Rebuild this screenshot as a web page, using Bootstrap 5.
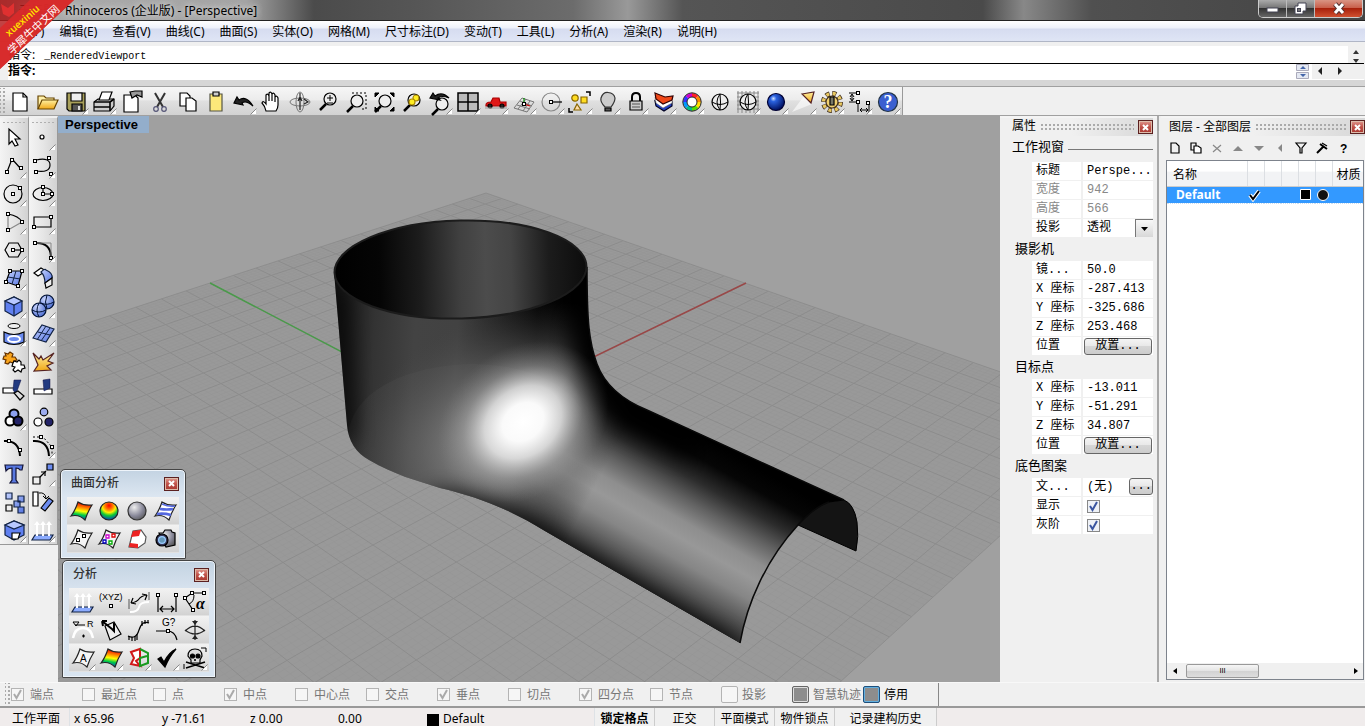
<!DOCTYPE html>
<html lang="zh-CN">
<head>
<meta charset="utf-8">
<meta name="viewport" content="width=device-width, initial-scale=1">
<title>Rhinoceros (企业版) - [Perspective]</title>
<link href="https://cdn.jsdelivr.net/npm/bootstrap@5.3.0/dist/css/bootstrap.min.css" rel="stylesheet">
<style>
body{font:12px/18px "Noto Sans","Noto Sans CJK SC",sans-serif;color:#000;background:#f0f0f0;overflow:hidden}
button,input,select{font:inherit;color:inherit;border-radius:0}
.titlebar{height:21px;background:linear-gradient(90deg,#777,#aaa 4%,#a4a4a4 18%,#4b4b4b 23%,#555 30%,#6c6c6c 42%,#999 46%,#555 50%,#4a4a4a 72%,#888 75%,#505050 80%,#444);border-bottom:1px solid #222}
.titlebar h1{font:inherit;padding-left:19px;line-height:22px}
.titlebar h1 span{text-shadow:0 0 6px #ddd,0 0 6px #ccc}
.winbtns{margin-right:2px;height:18px;border:1px solid #ccc;border-top:0;border-radius:0 0 5px 5px;overflow:hidden}
.winbtns button{border:0;border-right:1px solid #bbb;background:linear-gradient(#aaa,#777 45%,#333 50%,#666);width:28px;padding:0;line-height:0}
.winbtns button:last-child{width:47px;border:0;background:linear-gradient(#d99484,#c9604c 45%,#a8210c 50%,#d05030)}
.menubar{height:21px;background:linear-gradient(#fff,#eef1fa 35%,#d6dcf0 40%,#dfe5f5);border-bottom:1px solid #b0b6c6}
.menubar a{color:#000;text-decoration:none;padding:0 8px 0 7px;line-height:22px}
.cmdarea{height:45px;background:#f0f0f0;padding:4px 1px 0 8px;border-bottom:1px solid #a0a0a0}
.cmdrow{height:17px;background:#fff;line-height:17px}
.cmdrow:first-child{border-bottom:1px solid #000;height:18px}
.cmdrow+.cmdrow{height:16px;line-height:14px}
.cmdarea:after{content:"";display:block;height:6px;margin:0 -1px 0 -8px;background:#d6d6d6}
.mono10{font-family:"Liberation Mono","Noto Sans CJK SC",monospace;font-size:10px;margin-left:6px}
.cmdrow input{border:0;outline:0;background:none;min-width:0}
.toolstrip{height:29px;background:#f0f0f0;border-bottom:1px solid #a0a0a0}
.bar1{background:linear-gradient(#f6f6f6,#ececec 45%,#e0e0e0 50%,#d2d2d2);border-right:1px solid #999;padding-top:1px}
.griph{width:6px;background:radial-gradient(circle,#aaa 1px,transparent 1px) 2px 2px/4px 4px}
.gripv{height:6px;margin:0 2px;background:radial-gradient(circle,#b0b0b0 1px,transparent 1px) 0 2px/4px 5px}
.tool{border:0;background:none;padding:0;width:28px;height:28px;line-height:0;flex:none}
.tool svg{width:28px;height:28px}
.toolcol{width:29px;background:linear-gradient(90deg,#f4f4f4,#e6e6e6 50%,#d2d2d2);border-right:1px solid #999;border-bottom:1px solid #999;border-top:2px solid #f0f0f0}
.viewport{background:#a0a0a0;min-width:0;overflow:hidden}
.scene{position:absolute;inset:0;width:100%;height:100%}
.vplabel{position:absolute;left:0;top:0;background:#93aecb;font:bold 13px/17px "Liberation Sans",sans-serif;padding:0 11px 0 7px}
.palette{position:absolute;background:linear-gradient(#c3d3e2,#dce6f1 30%,#d8e4f0);border:1px solid #444;border-radius:5px 5px 1px 1px;box-shadow:inset 0 0 0 1px #eef4fa;padding:0 6px}
.palette h2{font-size:12px;line-height:26px;height:27px;margin:0;padding-left:4px;color:#333}
.pgrid{display:flex;flex-wrap:wrap;background:repeating-linear-gradient(#f2f2f2 0,#e4e4e4 14px,#d2d2d2 27px,#f2f2f2 28px)}
.closex{border:1px solid #5b2020;background:linear-gradient(#e09a90,#c05048 50%,#a83830);color:#fff;width:15px;height:14px;padding:0;line-height:0;box-shadow:inset 0 0 0 1px #dba}
.dock{border-top:2px solid #f4f4f4;background:#f0f0f0}
.dockhead{height:18px;background:linear-gradient(90deg,#f0f0f0 45%,#d8d8d8);gap:4px}
.dockhead i{flex:1;height:8px;background:radial-gradient(circle,#aaa 1px,transparent 1px) 0 0/4px 4px}
.props{width:157px;font-family:"Liberation Mono","Noto Sans CJK SC",monospace;font-size:12px}
.props h3{font-size:13px;font-weight:400;margin:0;line-height:23px;height:23px;padding-left:15px}
.props h3.topic{padding-left:12px;height:26px}
.props table{width:121px;margin-left:32px;border-collapse:separate;border-spacing:0;table-layout:fixed}
.props tr{height:19px}
.props th,.props td{font-weight:400;background:#fff;padding:0 0 0 4px;line-height:18px;border-bottom:1px solid #f0f0f0;height:19px;white-space:nowrap}
.props th{width:51px;border-right:2px solid #f0f0f0}
.props td input:not([type=checkbox]),.props select{border:0;background:none;padding:0;width:100%;height:18px;outline:0;appearance:none;display:block}
.props .off{color:#888}
.props .place{border:1px solid #666;border-radius:3px;background:linear-gradient(#f4f4f4,#e8e8e8 48%,#d6d6d6 50%,#ccc);display:block;height:17px;width:68px;margin-left:-3px;line-height:13px;padding:0}
.ddown{width:18px;height:18px;border:1px solid #777;border-right:0;border-bottom:0;background:linear-gradient(#f8f8f8,#d8d8d8);pointer-events:none}
.tick{appearance:none;width:13px;height:13px;border:1px solid #888;background:#eef1f6;margin:0;display:block;flex:none}
.tick:checked{background:#eef1f6 url("data:image/svg+xml,%3Csvg xmlns='http://www.w3.org/2000/svg' viewBox='0 0 11 11'%3E%3Cpath d='M2 5l2.500 4L9 1' fill='none' stroke='%233a55a0' stroke-width='2'/%3E%3C/svg%3E")}
.gutter{width:4px;background:#f0f0f0;border-left:2px solid #a8a8a8}
.layers{width:204px}
.ltools{height:24px;padding-left:3px}
.ltools button{border:0;background:none;padding:0;width:21px;line-height:0}
.lbox{margin:0 1px 2px 5px;border:1px solid #7d838c;background:#fff;min-height:0}
.lbox table{width:100%;table-layout:fixed;border-collapse:collapse}
.lbox th{font-weight:400;height:25px;padding:3px 0 0 6px;background:linear-gradient(#fff 40%,#f2f3f5 45%);border-right:1px solid #dcdfe3;border-bottom:1px solid #ccc;line-height:18px;white-space:nowrap;overflow:hidden}
.lbox th:last-child{padding-left:4px;border-right:0}
.lbox td{background:#39f;color:#fff;height:17px;padding:0;line-height:16px;font-weight:700;border-bottom:1px dotted #cde}
.hbar{height:16px;background:#f0f0f0;margin-top:auto}
.thumb{width:73px;height:14px;border:1px solid #999;border-radius:2px;background:linear-gradient(#f6f6f6,#e4e4e4 48%,#d2d2d2 50%,#ddd);line-height:10px;font-size:8px}
.snapbar{height:26px;background:#f0f0f0;border-bottom:2px solid #999;border-top:1px solid #f8f8f8}
.snapin{padding-left:5px;border-right:1px solid #888;width:939px}
.snapin label{width:71px;gap:6px;font-size:12px;color:#777;white-space:nowrap}
.snapin .tick{border-color:#b4b4b4;background-color:#f6f6f6}
.snapin .tick:checked{background-image:url("data:image/svg+xml,%3Csvg xmlns='http://www.w3.org/2000/svg' viewBox='0 0 11 11'%3E%3Cpath d='M2 5l2.500 4L9 1' fill='none' stroke='%23aaa' stroke-width='2'/%3E%3C/svg%3E")}
.snapin .bigtick{width:17px;height:17px;border-radius:2px}
.snapin label:has(.bigtick){gap:4px}
.snapin .gray{background:#8d8d8d;border-color:#666;box-shadow:inset 0 0 0 1px #ddd}
.snapin .blue{background:#8d8d8d;border-color:#1d4f7c;box-shadow:inset 0 0 0 1px #62b0e0}
.status{height:18px;background:#f0ecec;padding-left:4px}
.status span,.status button{line-height:22px;white-space:nowrap;flex:none}
.status button{border:0;border-right:1px solid #ccc;background:#f0f0f0;width:60px;padding:0}
.ribbon{position:absolute;left:0;top:0;width:74px;height:69px;z-index:5;overflow:visible}
</style>
</head>
<body class="vh-100 d-flex flex-column">
<svg width="0" height="0" class="position-absolute" aria-hidden="true"><defs>
<linearGradient id="rain" x1=".3" y1="0" x2=".1" y2="1"><stop offset="0" stop-color="#e00"/><stop offset=".25" stop-color="#f80"/><stop offset=".45" stop-color="#ff0"/><stop offset=".65" stop-color="#0c4"/><stop offset="1" stop-color="#02f"/></linearGradient>
<radialGradient id="rball" cx=".5" cy=".2" r=".85"><stop offset="0" stop-color="#f00"/><stop offset=".25" stop-color="#f70"/><stop offset=".45" stop-color="#fe0"/><stop offset=".65" stop-color="#1c3"/><stop offset="1" stop-color="#02d"/></radialGradient>
<radialGradient id="bball" cx=".35" cy=".3" r=".7"><stop offset="0" stop-color="#cfe0ff"/><stop offset=".25" stop-color="#2a62e0"/><stop offset="1" stop-color="#001060"/></radialGradient>
<radialGradient id="lball" cx=".35" cy=".3" r=".8"><stop offset="0" stop-color="#cdd8ff"/><stop offset="1" stop-color="#3f62cc"/></radialGradient>
<radialGradient id="gball" cx=".35" cy=".3" r=".8"><stop offset="0" stop-color="#eee"/><stop offset=".6" stop-color="#889"/><stop offset="1" stop-color="#555"/></radialGradient>
<linearGradient id="lb" x1="0" y1="0" x2="1" y2="1"><stop offset="0" stop-color="#c4d2ff"/><stop offset="1" stop-color="#5574e0"/></linearGradient>
<linearGradient id="gold" x1="0" y1="0" x2="0" y2="1"><stop offset="0" stop-color="#fff0a0"/><stop offset="1" stop-color="#f0a818"/></linearGradient>
</defs></svg>

<header class="titlebar d-flex justify-content-between flex-shrink-0">
 <h1 class="mb-0"><span>无标题 - Rhinoceros (企业版) - [Perspective]</span></h1>
 <div class="winbtns d-flex">
  <button type="button" title="最小化"><svg width="14" height="14"><rect x="1" y="6" width="11" height="4" fill="#fff" stroke="#445"/></svg></button>
  <button type="button" title="还原"><svg width="14" height="14"><path d="M4 1h8v8h-3v3h-8v-8h3z" fill="#fff" stroke="#445"/><rect x="3.500" y="6.500" width="3" height="3" fill="#777" stroke="#445"/></svg></button>
  <button type="button" title="关闭"><svg width="14" height="14"><path d="M3 2l8 9M11 2l-8 9" stroke="#533" stroke-width="5"/><path d="M3 2l8 9M11 2l-8 9" stroke="#fff" stroke-width="3"/></svg></button>
 </div>
</header>
<nav class="menubar d-flex flex-shrink-0">
 <a href="#">文件(F)</a><a href="#">编辑(E)</a><a href="#">查看(V)</a><a href="#">曲线(C)</a><a href="#">曲面(S)</a><a href="#">实体(O)</a><a href="#">网格(M)</a><a href="#">尺寸标注(D)</a><a href="#">变动(T)</a><a href="#">工具(L)</a><a href="#">分析(A)</a><a href="#">渲染(R)</a><a href="#">说明(H)</a>
</nav>
<section class="cmdarea flex-shrink-0">
 <div class="cmdrow d-flex justify-content-between"><div>指令: <span class="mono10">_RenderedViewport</span></div><svg width="16" height="17" style="background:#f0f0f0"><path d="M5 8h6l-3-4zM5 13h6l-3 4z" fill="#333"/></svg></div>
 <div class="cmdrow d-flex"><label for="cmd" class="fw-bold">指令:</label><input id="cmd" class="flex-grow-1"><svg width="68" height="15"><path fill="#f0f0f0" d="M16 0h52v15H16z"/><path fill="#e4e8f2" stroke="#aab" d="M.5.5h12v6H.5zM.5 8.500h12v6H.500z"/><path fill="#46a" d="M4 5h6L7 2zM4 10h6l-3 3z"/><path fill="#222" d="M26 3v8l-4-4zM42 3v8l4-4z"/></svg></div>
</section>
<section class="toolstrip d-flex flex-shrink-0"><div class="bar1 d-flex"><div class="griph"></div><div class="d-flex" id="mainbar"></div></div></section>

<main class="d-flex flex-grow-1" style="min-height:0">
 <aside class="d-flex align-items-start">
  <div class="toolcol"><div class="gripv"></div><div id="colA" class="d-flex flex-column"></div></div>
  <div class="toolcol"><div class="gripv"></div><div id="colB" class="d-flex flex-column"></div></div>
 </aside>
 <section class="viewport position-relative flex-grow-1">
  <svg class="scene" viewBox="58 116 942 566" preserveAspectRatio="xMinYMin slice">
   <defs>
    <linearGradient id="cyl" gradientUnits="userSpaceOnUse" x1="334" y1="0" x2="587" y2="12"><stop offset="0" stop-color="#080808"/><stop offset=".08" stop-color="#161616"/><stop offset=".22" stop-color="#333"/><stop offset=".38" stop-color="#434343"/><stop offset=".55" stop-color="#424242"/><stop offset=".7" stop-color="#262626"/><stop offset=".86" stop-color="#070707"/><stop offset="1" stop-color="#000"/></linearGradient>
    <linearGradient id="inner" gradientUnits="userSpaceOnUse" x1="334" y1="0" x2="587" y2="0"><stop offset="0" stop-color="#000"/><stop offset=".18" stop-color="#050505"/><stop offset=".34" stop-color="#1c1c1c"/><stop offset=".5" stop-color="#404040"/><stop offset=".6" stop-color="#4c4c4c"/><stop offset=".7" stop-color="#444"/><stop offset=".85" stop-color="#1c1c1c"/><stop offset="1" stop-color="#0c0c0c"/></linearGradient>
    <linearGradient id="tube" gradientUnits="userSpaceOnUse" x1="690" y1="430" x2="609" y2="574"><stop offset="0" stop-color="#000"/><stop offset=".12" stop-color="#060606"/><stop offset=".25" stop-color="#2c2c2c"/><stop offset=".38" stop-color="#626262"/><stop offset=".5" stop-color="#8e8e8e"/><stop offset=".6" stop-color="#989898"/><stop offset=".72" stop-color="#868686"/><stop offset=".86" stop-color="#565656"/><stop offset="1" stop-color="#242424"/></linearGradient>
    <linearGradient id="fade" gradientUnits="userSpaceOnUse" x1="530" y1="450" x2="596" y2="484"><stop offset="0" stop-color="#000"/><stop offset="1" stop-color="#fff"/></linearGradient>
    <mask id="fm" maskUnits="userSpaceOnUse" x="300" y="200" width="600" height="500"><rect x="300" y="200" width="600" height="500" fill="url(#fade)"/></mask>
    <radialGradient id="mid" gradientUnits="userSpaceOnUse" cx="520" cy="435" r="180" gradientTransform="translate(520 435) rotate(-20) scale(1 .7) translate(-520 -435)"><stop offset="0" stop-color="#b4b4b4"/><stop offset=".4" stop-color="#808080" stop-opacity=".8"/><stop offset="1" stop-color="#484848" stop-opacity="0"/></radialGradient>
    <radialGradient id="hot" gradientUnits="userSpaceOnUse" cx="0" cy="0" r="92" gradientTransform="translate(523 422) rotate(-38) scale(1 .8)"><stop offset="0" stop-color="#fff"/><stop offset=".24" stop-color="#fafafa"/><stop offset=".45" stop-color="#eee" stop-opacity=".75"/><stop offset=".7" stop-color="#bbb" stop-opacity=".3"/><stop offset="1" stop-color="#888" stop-opacity="0"/></radialGradient>
    <filter id="soft" x="-30%" y="-30%" width="160%" height="160%"><feGaussianBlur stdDeviation="11"/></filter>
    <path id="body" d="M334 272L347 425Q349 449 369 460C395 475 415 480 440 488C480 497 515 512 545 531L740 643C747 603 766 560 798 525C809 513 820 505 829 502L844 500L647 410C620 399 604 383 597 364C589 342 587 322 587 267A127 49.500 -1.500 0 1 334 272Z"/>
    <clipPath id="bc"><use href="#body"/></clipPath>
   </defs>
   <g id="floor"></g>
   <path d="M210 283L468 418" stroke="#4a9a4a" stroke-width="1.500"/><path d="M746 283L468 418" stroke="#994848" stroke-width="1.500"/>
   <path d="M798 525C809 513 820 505 829 502L844 500Q854 504 857 522Q859 536 856 551Z" fill="#141414" stroke="#000"/>
   <use href="#body" fill="url(#cyl)"/>
   <g clip-path="url(#bc)">
    <path d="M348 435C352 390 410 364 475 364C540 366 580 390 590 430L600 560H380Z" fill="#777" opacity=".1"/>
    <ellipse cx="505" cy="435" rx="190" ry="150" fill="url(#mid)"/>
    <rect x="510" y="300" width="360" height="360" fill="url(#tube)" mask="url(#fm)"/>
    <g filter="url(#soft)" fill="none">
     <path d="M592 260C590 340 592 375 612 392C630 412 650 415 700 440" stroke="#000" stroke-width="42"/>
     <path d="M430 500C480 502 515 520 545 540L730 650" stroke="#111" stroke-width="16"/>
     <path d="M338 290L347 440" stroke="#000" stroke-width="12"/>
    </g>
    <circle cx="524" cy="419" r="100" fill="url(#hot)"/>
   </g>
   <path d="M587 267C587 322 589 342 597 364C604 383 620 399 647 410L844 500M740 643C747 603 766 560 798 525C809 513 820 505 829 502" fill="none" stroke="#0a0a0a" stroke-width="1.500"/>
   <ellipse cx="460.500" cy="269.500" rx="126" ry="49" transform="rotate(-1.500 460 270)" fill="url(#inner)" stroke="#1c1c1c" stroke-width="2"/>
  </svg>
  <div class="vplabel">Perspective</div>
  <section class="palette" style="left:2px;top:353px;width:126px;height:90px"><div class="d-flex justify-content-between align-items-center"><h2>曲面分析</h2><button class="closex" type="button" title="关闭"><svg width="9" height="9"><path d="M2 2l5 5M7 2L2 7" stroke="#fff" stroke-width="2"/></svg></button></div><div id="palA" class="pgrid"></div></section>
  <section class="palette" style="left:4px;top:444px;width:154px;height:118px"><div class="d-flex justify-content-between align-items-center"><h2>分析</h2><button class="closex" type="button" title="关闭"><svg width="9" height="9"><path d="M2 2l5 5M7 2L2 7" stroke="#fff" stroke-width="2"/></svg></button></div><div id="palB" class="pgrid"></div></section>
 </section>
 <aside class="dock props flex-shrink-0">
  <div class="dockhead d-flex align-items-center ps-2 ms-1 me-1"><span>属性</span><i></i><button class="closex" type="button" title="关闭"><svg width="9" height="9"><path d="M2 2l5 5M7 2L2 7" stroke="#fff" stroke-width="2"/></svg></button></div>
  <div class="d-flex align-items-center"><h3 class="topic">工作视窗</h3><hr class="flex-grow-1 my-0 ms-1 me-1 opacity-50"></div>
  <table>
   <tr><th>标题</th><td><input aria-label="标题" value="Perspe..."></td></tr>
   <tr class="off"><th>宽度</th><td>942</td></tr>
   <tr class="off"><th>高度</th><td>566</td></tr>
   <tr><th>投影</th><td><div class="d-flex"><select aria-label="投影"><option>透视</option></select><span class="ddown flex-shrink-0"><svg width="16" height="16" class="d-block"><path d="M5 7h7l-3.500 4z"/></svg></span></div></td></tr>
  </table>
  <h3>摄影机</h3>
  <table>
   <tr><th>镜...</th><td><input aria-label="镜头" value="50.0"></td></tr>
   <tr><th>X 座标</th><td><input aria-label="摄影机 X" value="-287.413"></td></tr>
   <tr><th>Y 座标</th><td><input aria-label="摄影机 Y" value="-325.686"></td></tr>
   <tr><th>Z 座标</th><td><input aria-label="摄影机 Z" value="253.468"></td></tr>
   <tr><th>位置</th><td><button class="place" type="button">放置...</button></td></tr>
  </table>
  <h3>目标点</h3>
  <table>
   <tr><th>X 座标</th><td><input aria-label="目标点 X" value="-13.011"></td></tr>
   <tr><th>Y 座标</th><td><input aria-label="目标点 Y" value="-51.291"></td></tr>
   <tr><th>Z 座标</th><td><input aria-label="目标点 Z" value="34.807"></td></tr>
   <tr><th>位置</th><td><button class="place" type="button">放置...</button></td></tr>
  </table>
  <h3>底色图案</h3>
  <table>
   <tr><th>文...</th><td><div class="d-flex justify-content-between"><span>(无)</span><button class="place w-auto" type="button">...</button></div></td></tr>
   <tr><th><label for="c1">显示</label></th><td><input id="c1" type="checkbox" class="tick" checked></td></tr>
   <tr><th><label for="c2">灰阶</label></th><td><input id="c2" type="checkbox" class="tick" checked></td></tr>
  </table>
 </aside>
 <div class="gutter flex-shrink-0"></div>
 <aside class="dock layers flex-shrink-0 d-flex flex-column">
  <div class="dockhead d-flex align-items-center ps-2 flex-shrink-0"><span>图层 - 全部图层</span><i></i><button class="closex" type="button" title="关闭"><svg width="9" height="9"><path d="M2 2l5 5M7 2L2 7" stroke="#fff" stroke-width="2"/></svg></button></div>
  <div class="ltools d-flex align-items-center flex-shrink-0" id="ltools"></div>
  <div class="lbox d-flex flex-column flex-grow-1">
   <table><colgroup><col style="width:80px"><col style="width:17px"><col style="width:17px"><col style="width:17px"><col style="width:17px"><col style="width:17px"><col></colgroup>
    <thead><tr><th>名称</th><th></th><th></th><th></th><th></th><th></th><th>材质</th></tr></thead>
    <tbody><tr><td style="padding-left:9px">Default</td><td><svg width="14" height="14" class="d-block"><path d="M3 7l3 4 6-8" fill="none" stroke="#fff" stroke-width="4"/><path d="M3 7l3 4 6-8" fill="none" stroke="#000" stroke-width="2"/></svg></td><td></td><td></td><td><svg width="14" height="14" class="d-block"><path d="M2.500 1.500h10v10h-10z" stroke="#fff"/></svg></td><td><svg width="14" height="14" class="d-block"><circle cx="8" cy="7" r="5.500" fill="#111" stroke="#fff"/></svg></td><td></td></tr></tbody>
   </table>
   <div class="hbar d-flex align-items-center"><svg width="19" height="14"><path d="M10 4v6L6 7z"/></svg><div class="thumb text-center">ııı</div><svg width="16" height="14" class="ms-auto"><path d="M7 4v6l4-3z"/></svg></div>
  </div>
 </aside>
</main>

<section class="snapbar flex-shrink-0"><div class="snapin d-flex h-100"><div class="griph"></div>
 <div class="d-flex align-items-center" id="snaps"></div></div></section>
<footer class="status d-flex flex-shrink-0">
 <span style="width:66px" class="ps-2 border-end">工作平面</span><span style="width:88px" class="ps-1">x 65.96</span><span style="width:88px" class="ps-1">y -71.61</span><span style="width:88px" class="ps-1">z 0.00</span><span style="width:89px" class="ps-1">0.00</span>
 <span style="width:172px" class="ps-1 border-end"><svg width="12" height="12" class="align-middle me-1"><path d="M0 0h12v12H0z"/></svg>Default</span>
 <button type="button" class="fw-bold">锁定格点</button><button type="button">正交</button><button type="button">平面模式</button><button type="button">物件锁点</button><button type="button" style="width:102px">记录建构历史</button>
</footer>
<svg class="ribbon" viewBox="0 0 74 69"><path d="M0 0H74L0 69Z" fill="#b51a1a" opacity=".82"/><path d="M30 0H74L0 69V28Z" fill="#da2a2a" opacity=".9"/><path d="M1 4l7 4 6-5v10l-5 4-6-3z" fill="#e03030"/><g font-family="'Noto Sans','Noto Sans CJK SC',sans-serif"><text x="9" y="37" font-size="10" font-weight="600" fill="#fd0" transform="rotate(-41 9 37)">xuexiniu</text><text x="12" y="55" font-size="11" fill="#fff" transform="rotate(-43 12 55)">学犀牛中文网</text></g></svg>

<script>
const n=(...p)=>{let s='';for(let i=0;i<p.length;i+=2)s+=`<rect x="${p[i]-1.5}" y="${p[i+1]-1.5}" width="3" height="3" fill="#fff" stroke="#000"/>`;return s};
const P=(d,f='none',s='#000',w=1.2)=>`<path d="${d}" fill="${f}" stroke="${s}" stroke-width="${w}"/>`;
const C=(x,y,r,f='none',s='#000',w=1.2)=>`<circle cx="${x}" cy="${y}" r="${r}" fill="${f}" stroke="${s}" stroke-width="${w}"/>`;
const fly=P('M26 21V26H21Z','#fff','none')+P('M20.500 26.500L26.500 20.500','none','#888',1);
const mag=(x,y,c='#eee')=>C(x,y,6,c)+P(`M${x-4} ${y+5}L${x-10} ${y+11}`,'none','#000',2.5);
const surf=f=>P('M4 19Q8 14 11 5Q17 9 25 8Q21 14 18 23Q12 17 4 19Z',f,'#222');
const arrows=P('M6 19H24L21 24H3Z','#8cacff','#124')+P('M8 20V7M14 20V7M20 20V7','none','#fff',2)+P('M5 9L8 5 11 9ZM11 9l3-4 3 4ZM17 9l3-4 3 4Z','#fff','none');
const globe=C(14,14,8,'#eee')+P('M14 6Q8 14 14 22M6 14Q14 19 22 14M14 6Q15 14 14 22','none','#000',1);
const mainIcons=[
['新建',P('M7 5H17L21 9V23H7Z','#fff')+P('M17 5V9H21')],
['打开',P('M4 21V8H10L12 10H20V12','#fff0a8','#640')+P('M4 21L8 12H24L20 21Z','url(#gold)','#640')],
['保存',P('M5 5H23V23H7L5 21Z','#a8a05a')+P('M9 5H20V13H9Z','#eee')+P('M10 16H20V23H10Z','#555')+P('M16 18H18V22H16Z','#ddd','none')+fly],
['打印',P('M4 14L8 11H24V18L20 23H4Z','#ccc')+P('M4 14H20V23M20 14L24 11M4 19H20','none','#000',1.6)+P('M9 12L12 4H22L19 12Z','#fff')+fly],
['属性',P('M6 7H17L20 10V24H6Z','#fff')+P('M12 4L17 3 24 3V9L19 7 14 10Z','#999')],
['剪切',P('M9 5L17 19M19 5L11 19','none','#333',2)+C(10,21,2.3,'none','#557')+C(18,21,2.3,'none','#557')],
['复制',P('M6 5H13L16 8V18H6Z','#fff')+P('M12 10H18L22 13V23H12Z','#fff')],
['粘贴',P('M8 6H20V23H8Z','#fce87a','#554')+P('M11 4H17V8H11Z','#ccc')],
['撤消',P('M4 15L7 9 9 12Q16 7 23 18Q16 12 12 15L13 17Z','#222')+fly],
['平移',P('M8 23Q7 18 4 15 5 12 8 16V7Q10 5 11 8V13 5Q13 3 14 6V13 6Q16 4 17 7V14 9Q19 7 20 10V17Q20 20 18 23Z','#fff')],
['旋转',`<ellipse cx="14" cy="14" rx="10" ry="4" fill="none" stroke="#777"/><ellipse cx="14" cy="14" rx="4" ry="10" fill="none" stroke="#777"/>`+P('M14 5V22M12 13L14 9 16 13M18 16l4-2-4-3','none','#222',1.2)],
['缩放',mag(16,11)+P('M13 10H19M16 7V13M13 15H19','none','#000',1)],
['窗选缩放',mag(15,13)+P('M10 5H24V21H20','none','#000',1).replace('/>',' stroke-dasharray="2 2"/>')],
['最大范围',mag(15,13)+P('M5 9V5H9ZM20 5H24V9ZM24 19V23H20ZM9 23H5V19Z','#000','#000',1)],
['选取缩放',mag(16,12)+C(18,10,3,'#fe2','#a80')+C(14,14,3,'#fe2','#a80')],
['复原视图',mag(16,16)+P('M4 10L7 5 9 8Q16 3 23 10Q16 7 12 10L14 12Z','#222')+fly],
['四视图',P('M4 5H24V23H4ZM14 5V23M4 14H24','#bbb','#000',1.5)+fly],
['汽车',P('M4 17Q4 14 9 14L11 10H17L18 14H24V18H4Z','#e01818','#a00')+C(8,18,2,'#222')+C(20,18,2,'#222')+P('M3 20H25','none','#999',1)+fly],
['工作平面',P('M4 20L12 10 24 14 17 24ZM7 17L20 21M10 13L22 18M8 21L16 11M13 23L20 13','none','#777',1)+P('M14 16V10','none','#080')+P('M14 16L20 18','none','#c00')+n(14,16)+fly],
['圆心',C(13,14,9,'none','#888')+P('M13 14H24')+n(13,14)+fly],
['选取',C(9,10,3.2,'#fd2','#860')+P('M15 9H21V15H15Z','#fd2','#860')+P('M11 16L15 22H8Z','#fda','#860')+P('M20 4H24V8M3 20V24H7','none','#000',1.5)+fly],
['灯',P('M11 19Q6 14 7 10Q9 4 14 4.500Q20 5 21 10Q21 14 17 19Z','#ccc','#333')+P('M11 20H17V23H11Z','#555')+fly],
['锁定',P('M10 13V9Q10 5 14 5T18 9V13','none','#000',2)+P('M8 13H20V22H8Z','#ccc')+P('M10 16H18M10 19H18','none','#555',1)+fly],
['图层',P('M5 13L13 19 22 14V18L14 23 6 18Z','#2440c0','#002')+P('M5 9L13 15 22 11V15L13 20 6 15Z','#fff','#666',.5)+P('M5 5L15 9 23 8 22 12 13 16 6 11Z','#f04818','#300')+fly],
['颜色',['#f22','#f80','#fd0','#5d0','#0b8','#09f','#33f','#c0c'].map((c,i)=>`<circle cx="14" cy="14" r="7" fill="none" stroke="${c}" stroke-width="4" stroke-dasharray="5.5 38.5" transform="rotate(${i*45-90} 14 14)"/>`).join('')+C(14,14,9.2,'none','#222',1)+C(14,14,5,'#fff','#222',1)+fly],
['着色',globe],
['网格着色',P('M3 5H25M3 9H25M3 13H25M3 17H25M3 21H25M4 3V25M8 3V25M12 3V25M16 3V25M20 3V25M24 3V25','none','#888',1)+globe+fly],
['渲染',C(14,14,8.5,'url(#bball)','#003')+fly],
['聚光灯',P('M2 24L14 8 22 16Z','#fff','none').replace('/>',' opacity=".6"/>')+P('M12 6L24 4 21 15Z','url(#gold)','#522')+fly],
['选项',`<circle cx="14" cy="14" r="8.500" fill="none" stroke="#432" stroke-width="5" stroke-dasharray="4 2.675"/><circle cx="14" cy="14" r="8.500" fill="none" stroke="#e8c860" stroke-width="3.400" stroke-dasharray="3 3.675" stroke-dashoffset="-.5"/>`+C(14,14,6,'#f0d070','#432')+P('M12 9H16V17H12Z','#776')+fly],
['尺寸',P('M3 5H12M3 14H12V24M6 7V12M4 9l2-3 2 3M4 10l2 3 2-3M23 14V24M14 22H21M16 20l-2 2 2 2M20 20l2 2-2 2','none','#000',1)+n(12,5,12,14,22,15)+fly],
['说明',C(14,14,9.5,'#3a5fd0','#234')+'<text x="14" y="20" text-anchor="middle" font-family="Liberation Serif" font-weight="700" font-size="18" fill="#fff">?</text>'+fly]];
const A=[
['选取',P('M9 5V20L12 17 15 22 18 21 15 15H20Z','#fff')],
['多重直线',P('M7 20L12 7 21 17')+n(7,20,12,8,21,16)+fly],
['圆',C(13,14,9)+n(13,14,20,8)+fly],
['圆弧',P('M8 6Q19 8 22 14')+P('M8 6V22L22 14','none','#888')+n(8,6,8,22,22,14)+fly],
['多边形',P('M9 7H18L22 14 18 21H9L5 14Z')+P('M13 14H22')+n(13,14,22,14)+fly],
['曲面',P('M10 7H22L18 22 6 18Z','url(#lb)')+P('M8 13L20 15M16 7L12 20','none','#124',1)+n(10,7,22,7,18,22,6,18)+fly],
['立方体',P('M5 9L14 5 22 9V19L14 24 5 19Z','#6080f0','#124')+P('M5 9L14 5 22 9 14 13Z','#b8c8ff','#124')+P('M14 13V24','none','#124')+fly],
['旋转体',`<ellipse cx="14" cy="6" rx="6" ry="2.500" fill="#eee" stroke="#000"/>`+P('M4 12Q14 17 24 12V22Q14 27 4 22Z','#6c8cf0')+`<ellipse cx="14" cy="19" rx="6" ry="3" fill="none" stroke="#fff" stroke-width="2"/>`+fly],
['拼图',P('M5 5L8 6 10 4 13 6 12 9 15 9 17 12 14 13 13 15 10 14 8 16 5 15 6 12 3 11 4 8 6 8Z','#f9a51c','#630')+P('M14 13L17 14 19 12 21 14 21 17 24 17 25 20 22 21 21 24 18 22 15 24 13 22 15 19 12 18 13 15Z','#fff')],
['修剪',P('M3 12H15V17H3Z','#fff')+P('M13 14L14 4H21L16 18Z','#223a80','#114',.5)+P('M14 17L18 15 24 20 20 24Z','#ddd')],
['群组',C(14,10,4.500,'#8ca0f0','#000',2)+C(10,17,4.500,'#fff','#000',2)+C(18,17,4.500,'#226','#000',2)+fly],
['点编辑',P('M4 9Q19 8 20 24','none','#000',2)+n(9,9,20,18)],
['文字',P('M5 5H23L22 10H20Q19 8 16 8V20L18 23H10L12 20V8Q8 8 6 11Z','#5878e0','#113')],
['阵列',P('M6 5H12V11H6ZM18 8H24V14H18ZM14 13H20V19H14ZM18 19H24V25H18Z','url(#lb)','#124')+P('M6 17H12V23H6Z','#eee')],
['实体编辑',P('M5 9L14 5 24 9V19L14 24 5 19Z','#6080f0','#124')+P('M5 9L14 5 24 9 14 13Z','#b8c8ff','#124')+P('M12 17H20L18 23H12Z','#fff')+fly]];
const B=[
['点',C(13,13,2,'#fff')+fly],
['曲线',P('M7 8Q21 5 21 13T7 19')+n(6,9,20,6,7,20,22,22)+fly],
['椭圆',`<ellipse cx="14" cy="14" rx="10" ry="6.500" fill="none" stroke="#000" stroke-width="1.200"/>`+P('M14 7V14H23')+n(14,14,14,7,23,14)+fly],
['矩形',P('M5 9H22V19H5Z')+n(5,19,22,9)+fly],
['圆角',P('M6 7Q22 6 22 22','none','#000',2)+P('M6 7H22V22','none','#888',1)+n(6,7,22,22)+fly],
['放样',P('M5 9L12 4 17 7 9 12Z','#fff')+P('M12 8Q16 4 17 6Q24 9 23 14L16 19Q16 12 12 8Z','url(#lb)','#124')+P('M16 19L23 14V21L17 24Z','#eee')],
['球',C(18,10,7,'url(#lball)','#013')+C(10,18,7,'url(#lball)','#013')+P('M3 18Q10 22 17 18M10 11Q6 18 10 25M12 11Q18 14 25 10M18 3Q15 10 18 17','none','#013',1)+fly],
['网格面',P('M4 18L13 5 25 9 17 22Z','url(#lb)','#124')+P('M9 12L21 15M17 6L8 20M21 8L12 21','none','#124',1)+fly],
['炸开',P('M4 5L10 11 12 8 14 12 25 5 19 13 24 15 18 18 22 22 5 23 9 17Z','url(#gold)','#522')],
['分割',P('M5 13H23V18H5Z','#fff')+P('M14 4L21 3V12L15 15Z','#223a80','#114',.500)],
['组合',C(15,8,3.800,'#9cacf0')+C(9,18,4,'#fff')+C(20,18,4,'#226')],
['控制点',P('M4 9Q19 8 20 24','none','#000',2)+P('M4 5H14L23 15V23','none','#000',1).replace('/>',' stroke-dasharray="2 2"/>')+n(12,5,23,15)+fly],
['移动',P('M7 21L17 11')+P('M12 12l4 0 0 4','none')+P('M4 17H11V24H4Z','#eee')+P('M18 4H24V10H18Z','#6c8cf0')+fly],
['旋转',P('M4 4H9V18H4Z','#fff')+P('M10 5Q16 4 17 10M14 8l3 3 3-3','none','#000',1)+P('M12 20L20 10 24 13 16 23Z','#6c8cf0')],
['分析方向',arrows+fly]];
const PA=[['曲率',surf('url(#rain)')],['拔模角',C(14,14,9,'url(#rball)','#222')],['环境贴图',C(14,14,9,'url(#gball)','#333')],['斑马纹',surf('#fff')+P('M9 12Q16 13 22 12M6 17Q13 16 20 18','none','#5468e0',2.6)+P('M11 7Q18 10 24 9','none','#5468e0',1.6)],['点',surf('#f4f4f4')+n(11,15,17,11)],['点云',surf('#f4f4f4')+`<g fill="#fff" stroke-width="1.300"><path d="M11 10h3v3h-3z" stroke="#c0c"/><path d="M17 9h3v3h-3z" stroke="#d00"/><path d="M8 15h3v3H8z" stroke="#00b"/><path d="M14 16h3v3h-3z" stroke="#0a0"/></g>`],['边缘',P('M6 22L10 6 18 5 23 12 22 18 15 23Z','#fff','#555')+P('M10 6L18 5 16 11 8 12ZM7 18L15 19 15 23 6 22Z','#e22','none')],['捕捉',P('M8 8L12 8 14 5H20L21 7 24 8V20L15 22Z','url(#gball)')+C(11,15,6,'#335')+C(11,15,3.4,'#69b','#9cf')]];
const tx=(t,x,y,s)=>`<text x="${x}" y="${y}" font-family="Liberation Sans" font-size="${s}">${t}</text>`;
const PB=[['方向',arrows],['点坐标',tx('(XYZ)',2,12,9)+n(14,18)],['长度',P('M6 15Q12 14 14 11T22 7M6 15l2-5M6 15l5 1M22 7l-5-1M22 7l-2 5')+P('M4 11V21M24 4V12','none','#555',1)+P('M5 24Q13 24 14 19T24 14','none','#fff',2)],['距离',P('M5 7V24M23 7V24M7 21H21M10 18l-3 3 3 3M18 18l3 3-3 3')+n(5,7,23,7)],['角度',P('M4 10L12 22M4 10L11 5H23')+P('M8 16Q13 14 13 7','none','#000',1)+n(11,5,23,5,4,10,12,22)+'<text x="15" y="21" font-family="Liberation Serif" font-style="italic" font-weight="700" font-size="16">α</text>'],['半径',P('M6 9H16M4 6H10L7 10Z','none','#000',1)+P('M4 22Q6 12 14 12T24 22','none','#fff',2.500)+P('M13 20H16M14.500 18.500V21.500')+tx('R',18,11,9)],['包围盒',P('M8 10L17 6 24 18 13 24Z','#eee')+P('M5 5L15 13 17 15V7M5 5l1 5M5 5l5 0','none','#000',2)],['曲率图',P('M3 20Q11 24 14 14T24 7','none')+P('M4 20V24M7 21V25M10 20V25M12 18V24M17 5V10M20 4V8M23 4V7')],['连续性',P('M3 15H14Q22 15 24 24')+n(15,15)+tx('G?',9,10,10)],['偏差',P('M4 15Q14 5 24 15M4 14Q14 22 24 14M14 4V24','none','#222')+P('M11 5h6l-3 4zM11 23h6l-3-4z','#222','none')],['文本',surf('#f6f6f6')+tx('A',11,18,10)+fly],['曲面分析',surf('url(#rain)')+fly],['边缘工具',P('M6 8L15 5V14L11 17 15 22 6 20 9 14Z','#fff','#d01818',2)+P('M15 5L23 9V19L15 22V14L22 12','none','#1a9a20',2)+fly],['检查',P('M5 15L8 13 11 18Q16 8 23 5Q16 13 12 23Z','#000')+fly],['骷髅',P('M7 12Q7 5 14 5T21 12L19 16V19H10V16Z','#ddd')+C(11.500,12,2,'#000')+C(17,12,2,'#000')+P('M14 15v2M5 18L24 24M24 18L5 24','none','#000',1.6)+P('M20 4H25V8M3 20V25','none','#000',1)+fly]];
const put=(id,l)=>document.getElementById(id).innerHTML=l.map(([t,s])=>`<button type="button" class="tool" title="${t}"><svg viewBox="0 0 28 28">${s}</svg></button>`).join('');
put('mainbar',mainIcons);put('colA',A);put('colB',B);put('palA',PA);put('palB',PB);

document.getElementById('ltools').innerHTML=[
['新图层',P('M3 2H8L11 5V12H3Z')],['子图层',P('M2 2H7V9H2Z')+P('M5 5H9L12 7V12H5Z','#fff')],['删除',P('M3 4L11 11M11 4L3 11','none','#888')],['上移',P('M2 10H12L7 5Z','#888','none')],['下移',P('M2 5H12L7 10Z','#888','none')],['左移',P('M9 3V11L5 7Z','#888','none')],['过滤',P('M2 2H12L8 7V12H6V7Z')],['工具',P('M2 12L8 6M5 3L12 8','none','#000',2)+P('M7 2L12 5')],['说明','<text x="4" y="12" font-family="Liberation Sans" font-weight="700" font-size="12">?</text>']
].map(([t,s])=>`<button type="button" title="${t}"><svg width="14" height="14">${s}</svg></button>`).join('');

document.getElementById('snaps').innerHTML='端点*,最近点,点,中点*,中心点,交点,垂点*,切点,四分点*,节点,投影,智慧轨迹,停用'.split(',').map((t,i)=>{
 const on=t.endsWith('*'),c=i>9?' bigtick'+['',' gray',' blue'][i-10]:'';
 return `<label class="d-flex align-items-center${i==12?' text-black':''}"><input type="checkbox" class="tick${c}"${on?' checked':''}>${t.replace('*','')}</label>`}).join('');

// Ground plane: (u,v) in the unit square projected to the view.
const pr=(u,v)=>{const w=1-.323*u-.333*v;return ((279*u-622*v+486)/w).toFixed(1)+' '+((89.3*u+85.8*v+193)/w).toFixed(1)};
let minor='',major='';
for(let i=0;i<=140;i++){const t=i/140,d=`M${pr(t,0)}L${pr(t,1)}M${pr(0,t)}L${pr(1,t)}`;i%5?minor+=d:major+=d}
document.getElementById('floor').innerHTML=`<path d="M${pr(0,0)}L${pr(1,0)}L${pr(1,1)}L${pr(0,1)}Z" fill="#999"/><path d="${minor}" stroke="#8e8e8e" stroke-width=".5" opacity=".4"/><path d="${major}" stroke="#848484" stroke-width="1" opacity=".6"/>`;
</script>
<script src="https://cdn.jsdelivr.net/npm/bootstrap@5.3.0/dist/js/bootstrap.bundle.min.js"></script>
</body>
</html>
